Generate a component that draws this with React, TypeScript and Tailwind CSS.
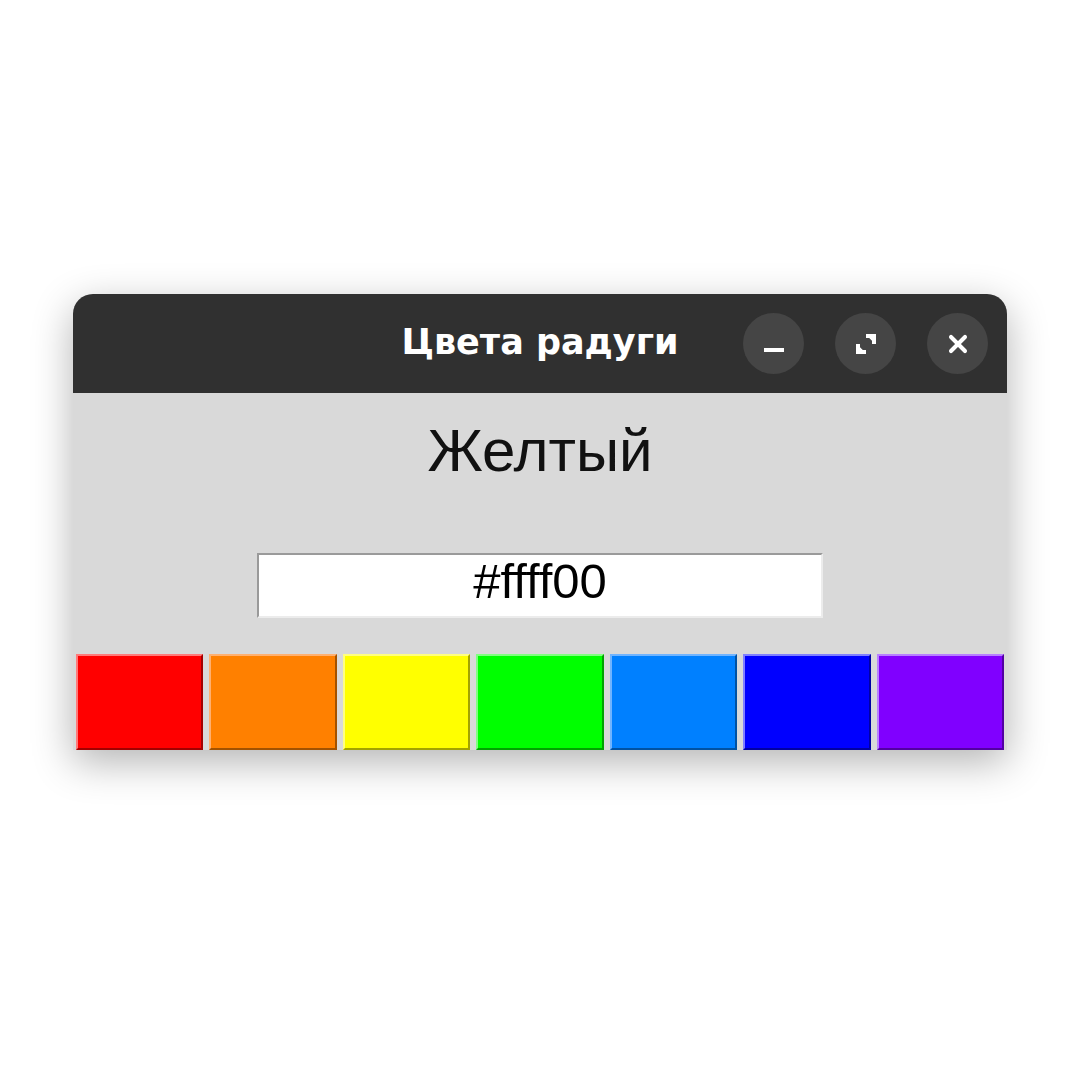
import { X } from "lucide-react";

const swatches = [
    { name: "red", className: "bg-[#ff0000] border-t-[#ff7a7a] border-l-[#ff7a7a] border-b-[#a30000] border-r-[#a30000]" },
    { name: "orange", className: "bg-[#ff8000] border-t-[#ffb070] border-l-[#ffb070] border-b-[#a35200] border-r-[#a35200]" },
    { name: "yellow", className: "bg-[#ffff00] border-t-[#ffff80] border-l-[#ffff80] border-b-[#a3a300] border-r-[#a3a300]" },
    { name: "green", className: "bg-[#00ff00] border-t-[#80ff80] border-l-[#80ff80] border-b-[#00a300] border-r-[#00a300]" },
    { name: "light blue", className: "bg-[#0080ff] border-t-[#70b4ff] border-l-[#70b4ff] border-b-[#0052a3] border-r-[#0052a3]" },
    { name: "blue", className: "bg-[#0000ff] border-t-[#8080ff] border-l-[#8080ff] border-b-[#0000a3] border-r-[#0000a3]" },
    { name: "violet", className: "bg-[#8000ff] border-t-[#b880ff] border-l-[#b880ff] border-b-[#5200a3] border-r-[#5200a3]" },
];

function TitleButton({ children }: { children: React.ReactNode }) {
    return (
        <button className="w-[61px] h-[61px] rounded-full bg-[#454545] flex items-center justify-center text-white">
            {children}
        </button>
    );
}

export default function App() {
    return (
        <div className="min-h-screen bg-white flex justify-center pt-[294px]">
            <div className="w-[934px] h-[456px] flex flex-col rounded-t-[20px] overflow-hidden shadow-[0_12px_40px_rgba(0,0,0,0.3)] bg-[#d9d9d9]">
                {/* title bar */}
                <div className="h-[99px] shrink-0 bg-[#303030] grid grid-cols-[1fr_auto_1fr] items-center px-[19px]">
                    <div />
                    <span className="text-white font-bold text-[35px] font-['DejaVu_Sans',sans-serif] leading-none pb-[2px]">
                        Цвета радуги
                    </span>
                    <div className="flex justify-end items-center gap-[31px]">
                        <TitleButton>
                            <svg width="24" height="24" viewBox="0 0 24 24" className="mt-[2px]">
                                <rect x="2" y="15" width="20" height="4" fill="white" />
                            </svg>
                        </TitleButton>
                        <TitleButton>
                            <svg width="32" height="32" viewBox="0 0 16 16">
                                <path d="M8 3h5v5h-2v-1.6l-1.4-1.4h-1.6z" fill="white" />
                                <path d="M8 13H3V8h2v1.6l1.4 1.4h1.6z" fill="white" />
                            </svg>
                        </TitleButton>
                        <TitleButton>
                            <X className="w-[28px] h-[28px]" strokeWidth={3.5} />
                        </TitleButton>
                    </div>
                </div>

                {/* body */}
                <div className="flex-1 flex flex-col items-center pt-[28px] font-['Liberation_Sans',Arial,sans-serif]">
                    <div className="text-[60px] leading-none text-[#111]">Желтый</div>
                    <input
                        readOnly
                        value="#ffff00"
                        className="mt-[72px] w-[566px] h-[65px] pb-[8px] bg-white text-center text-[49px] text-black outline-none border-2 border-t-[#9a9a9a] border-l-[#9a9a9a] border-b-[#ececec] border-r-[#ececec]"
                    />
                    <div className="mt-auto w-full grid grid-cols-7 gap-[6px] px-[3px]">
                        {swatches.map(s => (
                            <div key={s.name} className={`h-[96px] border-2 ${s.className}`} />
                        ))}
                    </div>
                </div>
            </div>
        </div>
    );
}
